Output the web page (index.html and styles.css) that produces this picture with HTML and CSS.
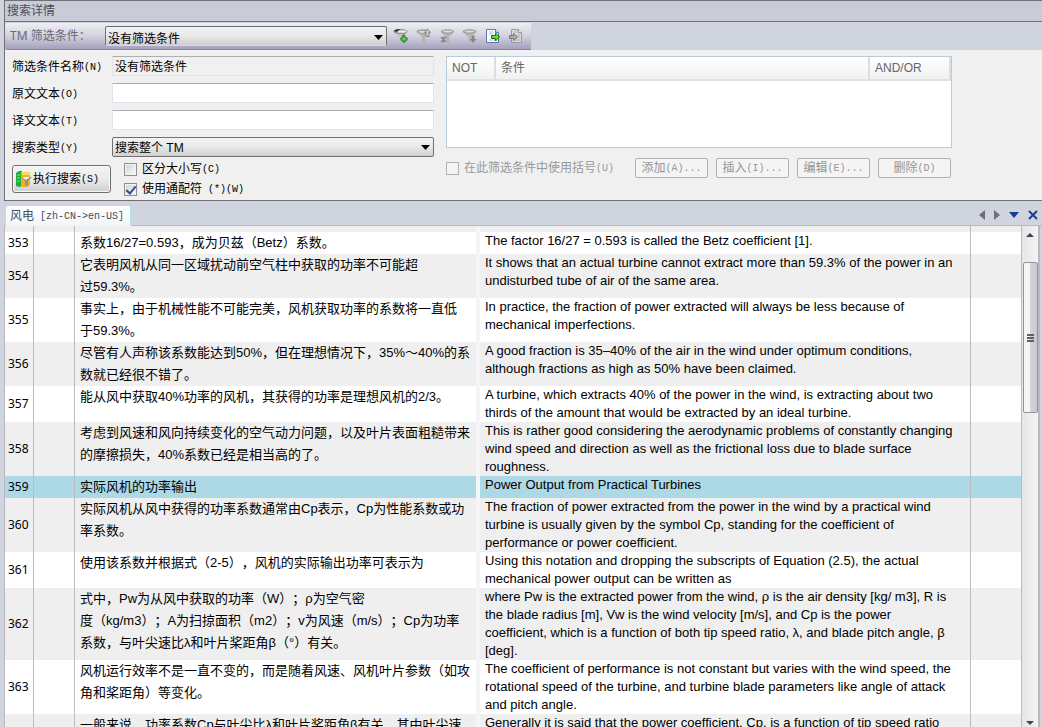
FILE: index.html
```html
<!DOCTYPE html>
<html lang="zh-CN">
<head>
<meta charset="utf-8">
<title>搜索详情</title>
<link rel="stylesheet" href="styles.css">
</head>
<body>
<div class="window">
  <section class="search">
    <h1 class="title">搜索详情</h1>
    <div class="strip">
      <div class="toolbar">
        <label class="toolbar-label" for="filter">TM 筛选条件：</label>
        <span class="combo combo-bar">
          <select id="filter"><option>没有筛选条件</option></select>
          <svg class="arrow" width="9" height="5" viewBox="0 0 9 5"><path d="M0 0h9L4.500 5z"/></svg>
        </span>
        <button class="tool" type="button" aria-label="新建筛选条件"><svg width="16" height="16" viewBox="0 0 16 16"><path d="M1 4l5 5v4l3 2V9l5-5z" fill="#c4c4c4"/><path d="M8 8l5.500-4-3 5z" fill="#888"/><ellipse cx="7.500" cy="3.500" rx="6.800" ry="2.400" fill="#8a8a8a"/><ellipse cx="8.500" cy="3.500" rx="5" ry="1.300" fill="#eee"/><path d="M.8 3q1-2 6.500-2L4 4z" fill="#333"/><path d="M9.500 7.500h3v2h2v3h-2v2h-3v-2h-2v-3h2z" fill="#0a7a0a"/><path d="M10.500 8.500h1v2h2v1h-2v2h-1v-2h-2v-1h2z" fill="#8cf060"/></svg></button>
        <button class="tool" type="button" disabled aria-label="打开筛选条件"><svg width="16" height="16" viewBox="0 0 16 16"><path d="M1 4l5 5v4l3 2V9l5-5z" fill="#b4b4b4"/><ellipse cx="7" cy="3.500" rx="6.500" ry="2.200" fill="#9c9c9c"/><ellipse cx="6.500" cy="3.800" rx="4" ry="1" fill="#ddd"/><path d="M11.500 1l3 3.500h-1.500v4h-3v-4H8.500z" fill="#c8c8c8" stroke="#888"/></svg></button>
        <button class="tool" type="button" disabled aria-label="清除筛选条件"><svg width="16" height="16" viewBox="0 0 16 16"><path d="M2 4l5 5v4l3 2V9l5-5z" fill="#b4b4b4"/><ellipse cx="8.500" cy="3.500" rx="6.500" ry="2.200" fill="#9c9c9c"/><ellipse cx="8.500" cy="3.500" rx="4.500" ry="1" fill="#ddd"/><path d="M2 9l5 5M7 9l-5 5M4.500 8.500v6" stroke="#888" stroke-width="1.500"/></svg></button>
        <button class="tool" type="button" disabled aria-label="保存筛选条件"><svg width="16" height="16" viewBox="0 0 16 16"><path d="M1 4l5 5v4l3 2V9l5-5z" fill="#b8b8b8"/><ellipse cx="7.500" cy="3.500" rx="6.800" ry="2.200" fill="#989898"/><ellipse cx="7.500" cy="3.500" rx="5" ry="1" fill="#ddd"/><path d="M9.500 7.500h3v3.500h2l-3.500 4-3.500-4h2z" fill="#888"/></svg></button>
        <button class="tool" type="button" aria-label="导出"><svg width="16" height="16" viewBox="0 0 16 16"><path d="M1.500 1.500h9l3 3v10h-12z" fill="#fff" stroke="#5b78ad"/><path d="M4 4h5M4 6h4M4 12h7" stroke="#a8bad8"/><path d="M10.500 1.500v3h3" fill="#d5e0f2" stroke="#5b78ad"/><path d="M6.500 7.500h4v-2.500l4 4-4 4v-2.500h-4z" fill="#5ce02c" stroke="#087a08"/></svg></button>
        <button class="tool" type="button" disabled aria-label="导入"><svg width="16" height="16" viewBox="0 0 16 16"><path d="M3.500 1.500h7l3 3v10h-10z" fill="#d8d8d8" stroke="#999"/><path d="M6 4h4M9 7h3M9 9h3M6 12h6" stroke="#b0b0b0"/><path d="M10.500 1.500v3h3" fill="#eee" stroke="#999"/><path d="M1.500 7.500h4v-2l4 3.500-4 3.500v-2h-4z" fill="#aaa" stroke="#777"/></svg></button>
      </div>
    </div>
    <form class="form">
      <div class="criteria">
        <div class="fields">
          <label for="name">筛选条件名称<kbd>(N)</kbd></label>
          <input class="field readonly" id="name" type="text" value="没有筛选条件" readonly>
          <label for="source">原文文本<kbd>(O)</kbd></label>
          <input class="field" id="source" type="text">
          <label for="target">译文文本<kbd>(T)</kbd></label>
          <input class="field" id="target" type="text">
          <label for="type">搜索类型<kbd>(Y)</kbd></label>
          <span class="combo">
            <select id="type"><option>搜索整个 TM</option></select>
            <svg class="arrow" width="9" height="5" viewBox="0 0 9 5"><path d="M0 0h9L4.500 5z"/></svg>
          </span>
        </div>
        <div class="actions">
          <button class="run" type="button"><svg width="16" height="18" viewBox="0 0 16 18"><path d="M0 3l3-2h3v15l-3 1-3-1z" fill="#1fae3a"/><path d="M1 5h3M1 8h3M1 11h3" stroke="#7be58a"/><path d="M5 2h9v13l-4 2H5z" fill="#f2b21c"/><path d="M6 2h8v3H6z" fill="#ffd95c"/><path d="M5 7h11l-4 4v6l-3-2v-4z" fill="#8e949c"/><path d="M6 7h8l-4 3z" fill="#eef0f2"/></svg><span>执行搜索<kbd>(S)</kbd></span></button>
          <div class="checks">
            <label><input class="check" type="checkbox"><span>区分大小写<kbd>(C)</kbd></span></label>
            <label><input class="check" type="checkbox" checked><span>使用通配符<kbd> (*)(W)</kbd></span></label>
          </div>
        </div>
      </div>
      <div class="conditions">
        <div class="list">
          <table class="list-table">
            <colgroup><col class="c-not"><col><col class="c-op"></colgroup>
            <thead><tr><th>NOT</th><th>条件</th><th>AND/OR</th></tr></thead>
          </table>
        </div>
        <div class="edit">
          <label class="dim"><input class="check" type="checkbox" disabled><span>在此筛选条件中使用括号<kbd>(U)</kbd></span></label>
          <div class="buttons">
            <button class="small" type="button" disabled>添加<kbd>(A)...</kbd></button>
            <button class="small" type="button" disabled>插入<kbd>(I)...</kbd></button>
            <button class="small" type="button" disabled>编辑<kbd>(E)...</kbd></button>
            <button class="small" type="button" disabled>删除<kbd>(D)</kbd></button>
          </div>
        </div>
      </div>
    </form>
  </section>

  <section class="memory">
    <div class="tabs">
      <button class="tab" type="button">风电<kbd> [zh-CN-&gt;en-US]</kbd></button>
      <div class="tab-tools">
        <button type="button" aria-label="上一个"><svg width="6" height="10" viewBox="0 0 6 10"><path d="M6 0v10L0 5z" fill="#707070"/></svg></button>
        <button type="button" aria-label="下一个"><svg width="6" height="10" viewBox="0 0 6 10"><path d="M0 0v10l6-5z" fill="#707070"/></svg></button>
        <button type="button" aria-label="列表"><svg width="10" height="6" viewBox="0 0 10 6"><path d="M0 0h10L5 6z" fill="#173f8f"/></svg></button>
        <button type="button" aria-label="关闭"><svg width="10" height="10" viewBox="0 0 10 10"><path d="M1 1l8 8M9 1l-8 8" stroke="#173f8f" stroke-width="2"/></svg></button>
      </div>
    </div>
    <div class="pane">
      <div class="view">
        <table class="units">
          <colgroup><col class="c-id"><col class="c-mark"><col class="c-zh"><col class="c-en"><col class="c-end"></colgroup>
          <tbody>
            <tr class="peek"><td></td><td></td><td></td><td></td><td></td></tr>
            <tr><th>353</th><td></td><td class="zh">系数16/27=0.593，成为贝兹（Betz）系数。</td><td class="en">The factor 16/27 = 0.593 is called the Betz coefficient [1].</td><td></td></tr>
            <tr><th>354</th><td></td><td class="zh">它表明风机从同一区域扰动前空气柱中获取的功率不可能超<br>过59.3%。</td><td class="en">It shows that an actual turbine cannot extract more than 59.3% of the power in an<br>undisturbed tube of air of the same area.</td><td></td></tr>
            <tr><th>355</th><td></td><td class="zh">事实上，由于机械性能不可能完美，风机获取功率的系数将一直低<br>于59.3%。</td><td class="en">In practice, the fraction of power extracted will always be less because of<br>mechanical imperfections.</td><td></td></tr>
            <tr><th>356</th><td></td><td class="zh">尽管有人声称该系数能达到50%，但在理想情况下，35%～40%的系<br>数就已经很不错了。</td><td class="en">A good fraction is 35–40% of the air in the wind under optimum conditions,<br>although fractions as high as 50% have been claimed.</td><td></td></tr>
            <tr><th>357</th><td></td><td class="zh">能从风中获取40%功率的风机，其获得的功率是理想风机的2/3。</td><td class="en">A turbine, which extracts 40% of the power in the wind, is extracting about two<br>thirds of the amount that would be extracted by an ideal turbine.</td><td></td></tr>
            <tr><th>358</th><td></td><td class="zh">考虑到风速和风向持续变化的空气动力问题，以及叶片表面粗糙带来<br>的摩擦损失，40%系数已经是相当高的了。</td><td class="en">This is rather good considering the aerodynamic problems of constantly changing<br>wind speed and direction as well as the frictional loss due to blade surface<br>roughness.</td><td></td></tr>
            <tr class="current"><th>359</th><td></td><td class="zh">实际风机的功率输出</td><td class="en">Power Output from Practical Turbines</td><td></td></tr>
            <tr><th>360</th><td></td><td class="zh">实际风机从风中获得的功率系数通常由Cp表示，Cp为性能系数或功<br>率系数。</td><td class="en">The fraction of power extracted from the power in the wind by a practical wind<br>turbine is usually given by the symbol Cp, standing for the coefficient of<br>performance or power coefficient.</td><td></td></tr>
            <tr><th>361</th><td></td><td class="zh">使用该系数并根据式（2-5），风机的实际输出功率可表示为</td><td class="en">Using this notation and dropping the subscripts of Equation (2.5), the actual<br>mechanical power output can be written as</td><td></td></tr>
            <tr><th>362</th><td></td><td class="zh">式中，Pw为从风中获取的功率（W）；ρ为空气密<br>度（kg/m3）；A为扫掠面积（m2）；v为风速（m/s）；Cp为功率<br>系数，与叶尖速比λ和叶片桨距角β（°）有关。</td><td class="en">where Pw is the extracted power from the wind, ρ is the air density [kg/ m3], R is<br>the blade radius [m], Vw is the wind velocity [m/s], and Cp is the power<br>coefficient, which is a function of both tip speed ratio, λ, and blade pitch angle, β<br>[deg].</td><td></td></tr>
            <tr><th>363</th><td></td><td class="zh">风机运行效率不是一直不变的，而是随着风速、风机叶片参数（如攻<br>角和桨距角）等变化。</td><td class="en">The coefficient of performance is not constant but varies with the wind speed, the<br>rotational speed of the turbine, and turbine blade parameters like angle of attack<br>and pitch angle.</td><td></td></tr>
            <tr><th></th><td></td><td class="zh">一般来说，功率系数Cp与叶尖比λ和叶片桨距角β有关，其中叶尖速</td><td class="en">Generally it is said that the power coefficient, Cp, is a function of tip speed ratio</td><td></td></tr>
          </tbody>
        </table>
      </div>
      <div class="scroll">
        <svg width="8" height="4" viewBox="0 0 8 4"><path d="M4 0l4 4H0z" fill="#444"/></svg>
        <div class="track"><div class="thumb"><i></i><i></i><i></i></div></div>
        <svg width="8" height="4" viewBox="0 0 8 4"><path d="M0 0h8L4 4z" fill="#444"/></svg>
      </div>
    </div>
  </section>
</div>
</body>
</html>
```
FILE: styles.css
```css
* { box-sizing: border-box; }

body {
  margin: 0;
  background: #d0d4de;
  color: #000;
  font: 12px/16px "Liberation Sans", "Noto Sans CJK SC", sans-serif;
  text-spacing-trim: space-all;
}

button, input, select {
  margin: 0;
  font: inherit;
  color: inherit;
}

button {
  padding: 0;
  border: 0;
  background: none;
}

svg { display: block; flex: none; }

kbd {
  font: 10px/10px "Liberation Mono", monospace;
  vertical-align: 1px;
  white-space: pre;
}

.window {
  display: flex;
  flex-direction: column;
  height: 100vh;
  padding-left: 4px;
  overflow: hidden;
}

/* Search panel */

.search {
  flex: none;
  border: solid #707078;
  border-width: 1px 0 1px 1px;
  background: #f0f0f0;
}

.title {
  height: 21px;
  margin: 0;
  padding: 2px;
  border-bottom: 1px solid #707078;
  background: #c9ccd6;
  color: #484c58;
  font-size: 12px;
  font-weight: 400;
}

.strip {
  padding-top: 1px;
  background: #d0d4de;
}

.toolbar {
  display: flex;
  align-items: center;
  width: 526px;
  height: 27px;
  padding-left: 5px;
  border-bottom: 1px solid #8c88a4;
  border-radius: 2px 0 0 3px;
  background: linear-gradient(#eeeef2, #d2d1de 50%, #a5a0bf);
}

.toolbar-label {
  flex: none;
  width: 95px;
  color: #6a6876;
  font-family: "Noto Sans", "Noto Sans CJK SC", sans-serif;
}

.combo {
  display: grid;
  grid-template-columns: 1fr 13px;
  align-items: center;
}

.combo select {
  grid-area: 1 / 1 / 2 / 3;
  height: 20px;
  padding: 1px 2px 0;
  border: 1px solid #707070;
  border-radius: 2px;
  background: linear-gradient(#f3f3f3, #e8e8e8 50%, #cfcfcf);
  appearance: none;
}

.arrow {
  grid-area: 1 / 2;
  pointer-events: none;
}

.combo-bar {
  flex: none;
  width: 282px;
  margin-right: 6px;
}

.combo-bar select {
  padding-top: 4px;
  border-bottom-color: #d8d8d8;
}

.combo-bar .arrow { margin-top: 3px; }

.tool {
  flex: none;
  margin-right: 7px;
}

.form {
  display: flex;
  gap: 12px;
  height: 150px;
  padding: 6px 0 0 7px;
}

.fields {
  display: grid;
  grid-template-columns: 100px 322px;
  grid-auto-rows: 20px;
  row-gap: 7px;
  align-items: center;
}

.fields label { padding-top: 2px; }

.field {
  width: 100%;
  height: 20px;
  padding: 0 2px 2px;
  border: 1px solid #e2e3ea;
  border-top-color: #abadb3;
  border-radius: 1px;
  background: #fff;
}

.readonly { background: #f0f0f0; }

.actions {
  display: flex;
  align-items: flex-start;
  gap: 13px;
  padding-top: 4px;
}

.run {
  display: flex;
  align-items: center;
  gap: 1px;
  width: 99px;
  height: 28px;
  margin-top: 4px;
  padding-left: 3px;
  border: 1px solid #707070;
  border-radius: 3px;
  background: linear-gradient(#f3f3f3, #ebebeb 50%, #cfcfcf);
  box-shadow: inset 0 0 0 1px #f8f8f8;
}

.checks {
  display: grid;
  row-gap: 4px;
}

.checks label, .dim {
  display: flex;
  align-items: center;
  gap: 5px;
}

.check {
  display: grid;
  width: 13px;
  height: 13px;
  border: 1px solid #8e8f8f;
  background: linear-gradient(135deg, #cdd1d6, #fafafa);
  box-shadow: inset 0 0 0 1px #f4f4f4;
  appearance: none;
}

.check:checked::after {
  width: 4px;
  height: 8px;
  place-self: center;
  border: solid #36508f;
  border-width: 0 2px 2px 0;
  transform: rotate(40deg);
  content: "";
}

.check:disabled {
  border-color: #b1b1b1;
  background: #f4f4f4;
}

.conditions { width: 506px; }

.list {
  height: 92px;
  border: 1px solid #bccbd9;
  background: #fff;
}

.list-table {
  width: 100%;
  border-spacing: 0;
  table-layout: fixed;
}

.c-not { width: 49px; }
.c-op { width: 81px; }

.list-table th {
  height: 24px;
  padding: 0 5px;
  border-right: 2px solid #dcdfdf;
  border-bottom: 2px solid #dde4e6;
  background: linear-gradient(#fff, #f1f1f1);
  color: #666;
  font-weight: 400;
  text-align: left;
}

.edit {
  display: flex;
  align-items: center;
  justify-content: space-between;
  padding: 10px 1px 0 0;
}

.dim { color: #989898; }

.buttons {
  display: flex;
  gap: 8px;
}

.small {
  width: 73px;
  height: 20px;
  border: 1px solid #adb2b5;
  border-radius: 2px;
  background: #f4f4f4;
  color: #959595;
}

/* Translation memory */

.memory {
  display: flex;
  flex: 1;
  flex-direction: column;
  min-height: 0;
}

.tabs {
  display: flex;
  flex: none;
  justify-content: space-between;
  height: 25px;
  padding: 5px 4px 0 2px;
  border-bottom: 1px solid #b8b8ba;
}

.tab {
  height: 20px;
  padding: 0 6px 0 4px;
  border-right: 2px solid #aee6ee;
  border-radius: 3px 3px 0 0;
  background: linear-gradient(#fff, #f3f5f7);
  color: #454b5a;
}

.tab-tools {
  display: flex;
  align-items: center;
  gap: 9px;
  height: 18px;
}

.pane {
  display: flex;
  flex: 1;
  min-height: 0;
  margin-right: 2px;
  border: solid #b8b8c0;
  border-width: 0 2px 0 1px;
  background: #f0f0f0;
}

.view {
  flex: 1;
  overflow: hidden;
}

.units {
  width: 100%;
  border-spacing: 0;
  table-layout: fixed;
  white-space: nowrap;
}

.c-id { width: 29px; }
.c-mark { width: 41px; }
.c-zh { width: 405px; }
.c-end { width: 51px; }

.units td, .units th {
  height: 22px;
  padding: 0;
  border-right: 1px solid #bcbcbc;
  font-weight: 400;
}

.units th {
  padding-left: 3px;
  font: 12px/16px "Noto Sans", sans-serif;
  text-align: left;
}

.units td:nth-child(3) { border-right: 4px solid #f5f5f7; }

.units .peek td { height: 6px; }

.units tr:nth-child(even) { background: #fff; }
.units tr:nth-child(odd) { background: #efefef; }

.units tr.current { background: #add8e6; }

.units .zh {
  padding-left: 5px;
  font-size: 13px;
  line-height: 22px;
  vertical-align: top;
}

.units .en {
  padding: 0 0 0 5px;
  font-size: 13px;
  line-height: 18px;
  vertical-align: top;
}

.scroll {
  display: flex;
  flex-direction: column;
  align-items: center;
  width: 16px;
  padding: 7px 0 2px;
  background: linear-gradient(90deg, #e6e6e6, #f3f3f3);
}

.track {
  flex: 1;
  align-self: stretch;
  padding: 25px 0 0 1px;
}

.thumb {
  display: flex;
  flex-direction: column;
  align-items: center;
  justify-content: center;
  gap: 1px;
  height: 151px;
  border: 1px solid #959595;
  border-radius: 2px;
  background: linear-gradient(90deg, #f5f5f5 45%, #d3d3d8 50%, #c9c9d0);
}

.thumb i {
  width: 7px;
  height: 2px;
  background: #606060;
}
```
